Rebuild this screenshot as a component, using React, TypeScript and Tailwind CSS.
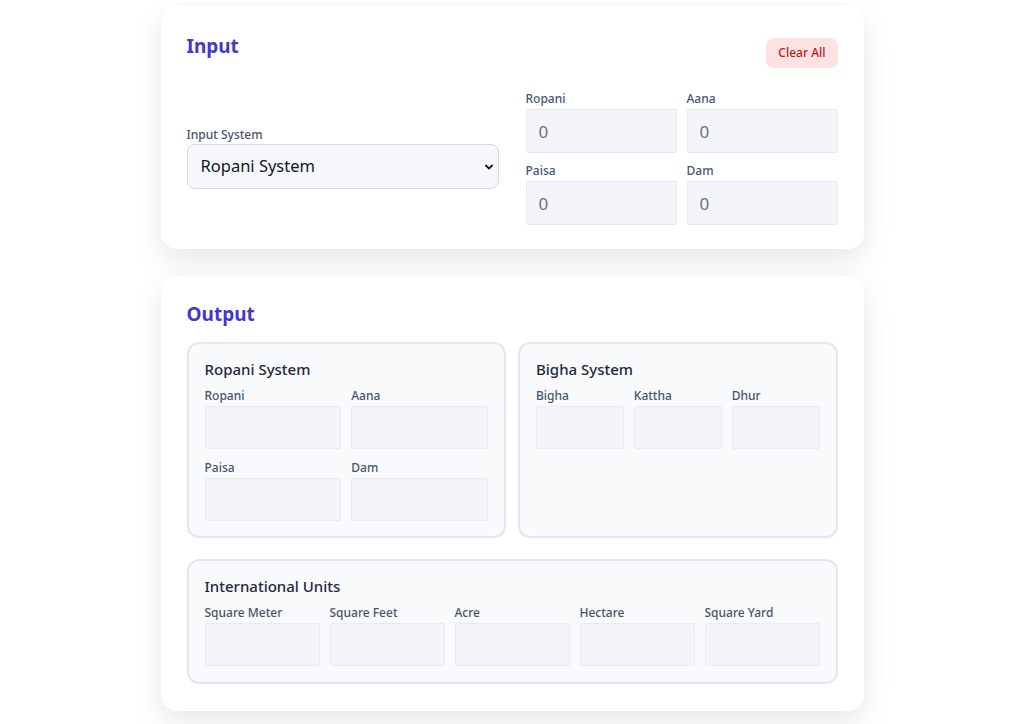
import React from "react";

const font = { fontFamily: '"Noto Sans", "Open Sans", sans-serif' };

function Field({ label, value }: { label: string; value?: string }) {
  return (
    <div className="flex flex-col">
      <label className="text-[12px] leading-4 font-medium text-[#475569] mb-[2px]">{label}</label>
      <input
        readOnly
        placeholder={value}
        className="h-[44px] w-full bg-[#f3f5f8] border border-[#e6eaef] rounded-[2px] px-3 text-[17px] text-[#6b7280] placeholder:text-[#6b7280] outline-none"
      />
    </div>
  );
}

function OutField({ label }: { label: string }) {
  return (
    <div className="flex flex-col">
      <label className="text-[12px] leading-4 font-medium text-[#475569] mb-[2px]">{label}</label>
      <div className="h-[43px] w-full bg-[#f3f5f8] border border-[#e8ecf1] rounded-[2px]" />
    </div>
  );
}

function SubCard({ title, children, pb = "pb-[15px]" }: { title: string; children: React.ReactNode; pb?: string }) {
  return (
    <div className={`bg-[#f8fafc] border-2 border-[#e1e7ef] rounded-xl px-4 pt-[13px] ${pb}`}>
      <h3 className="text-[15px] leading-6 font-medium text-[#1e293b] mb-[7px]">{title}</h3>
      {children}
    </div>
  );
}

export default function App() {
  return (
    <div className="min-h-[724px] bg-white pt-[6px] pb-4" style={font}>
      <div className="w-[703px] mx-auto flex flex-col gap-[27px]">
        <div className="bg-white rounded-2xl shadow-[0_10px_30px_rgba(0,0,0,0.10)] px-[26px] pt-[26px] pb-[24px]">
          <div className="flex justify-between items-start mb-[23px]">
            <h2 className="text-[19px] leading-7 font-bold text-[#4338ca]">Input</h2>
            <button className="mt-[6px] h-[30px] px-[12px] rounded-lg bg-[#fee2e2] text-[#b91c1c] text-[12px] font-medium">
              Clear All
            </button>
          </div>
          <div className="grid grid-cols-2 gap-[27px] items-center">
            <div className="flex flex-col">
              <label className="text-[12px] leading-4 font-medium text-[#475569] mb-[1px]">Input System</label>
              <div className="relative">
                <select
                  defaultValue="ropani"
                  className="appearance-none h-[45px] w-full bg-[#f5f7fa] border border-[#d3d9e1] rounded-lg pl-[13px] pr-8 text-[16.5px] text-[#111827] outline-none"
                >
                  <option value="ropani">Ropani System</option>
                  <option value="bigha">Bigha System</option>
                </select>
                <svg
                  className="absolute right-[5px] top-1/2 -translate-y-1/2 pointer-events-none"
                  width="10"
                  height="10"
                  viewBox="0 0 10 10"
                >
                  <path d="M2 3.5 L5 6.5 L8 3.5" fill="none" stroke="#111827" strokeWidth="1.8" strokeLinecap="round" strokeLinejoin="round" />
                </svg>
              </div>
            </div>
            <div className="grid grid-cols-2 gap-x-[10px] gap-y-[10px]">
              <Field label="Ropani" value="0" />
              <Field label="Aana" value="0" />
              <Field label="Paisa" value="0" />
              <Field label="Dam" value="0" />
            </div>
          </div>
        </div>

        <div className="bg-white rounded-2xl shadow-[0_10px_30px_rgba(0,0,0,0.10)] px-[26px] pt-[24px] pb-[27px]">
          <h2 className="text-[19px] leading-7 font-bold text-[#4338ca] mb-[14px]">Output</h2>
          <div className="flex flex-col gap-[21px]">
            <div className="grid grid-cols-2 gap-3">
              <SubCard title="Ropani System">
                <div className="grid grid-cols-2 gap-x-[10px] gap-y-[11px]">
                  <OutField label="Ropani" />
                  <OutField label="Aana" />
                  <OutField label="Paisa" />
                  <OutField label="Dam" />
                </div>
              </SubCard>
              <SubCard title="Bigha System">
                <div className="grid grid-cols-3 gap-x-[10px]">
                  <OutField label="Bigha" />
                  <OutField label="Kattha" />
                  <OutField label="Dhur" />
                </div>
              </SubCard>
            </div>
            <SubCard title="International Units" pb="pb-[16px]">
              <div className="grid grid-cols-5 gap-x-[10px]">
                <OutField label="Square Meter" />
                <OutField label="Square Feet" />
                <OutField label="Acre" />
                <OutField label="Hectare" />
                <OutField label="Square Yard" />
              </div>
            </SubCard>
          </div>
        </div>
      </div>
    </div>
  );
}
